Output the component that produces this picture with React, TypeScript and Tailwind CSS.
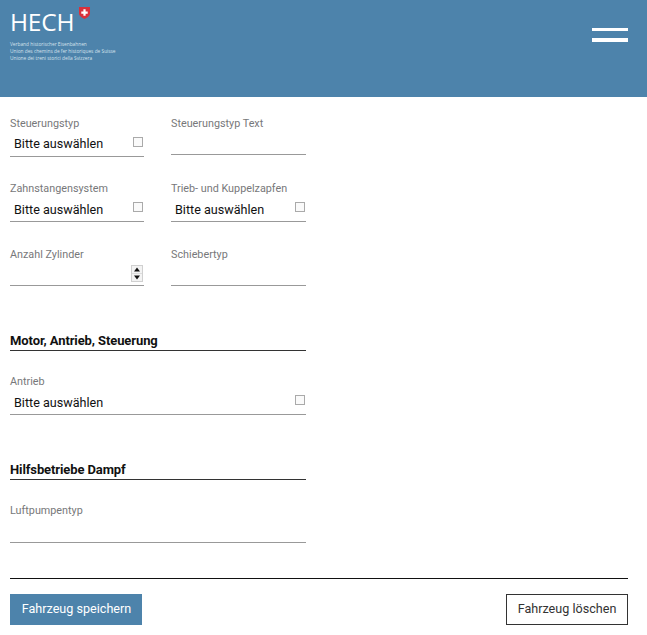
const font = "font-['Roboto',sans-serif]";

function Label({ children }: { children: string }) {
  return <div className={`${font} text-[10.800px] leading-[13px] text-[#77787a]`}>{children}</div>;
}

function SelectField({ label, width, first }: { label: string; width: string; first?: boolean }) {
  return (
    <div className={`${width} shrink-0`}>
      <Label>{label}</Label>
      <div className="mt-[1px] flex h-[26px] items-center justify-between border-b border-[#999] pl-1 pr-[1px]">
        <span className={`${font} ${first ? "mt-[1px]" : "mt-[3px]"} text-[12.600px] leading-[18px] text-[#111]`}>Bitte auswählen</span>
        <span className="mb-[4px] h-[10px] w-[10px] border border-[#aaa] bg-[#fafafa]" />
      </div>
    </div>
  );
}

function TextField({ label, width, tall }: { label: string; width: string; tall?: boolean }) {
  return (
    <div className={`${width} shrink-0`}>
      <Label>{label}</Label>
      <div className={`${tall ? "h-[25px]" : "h-[24px]"} mt-[1px] border-b border-[#999]`} />
    </div>
  );
}

function NumberField({ label, width }: { label: string; width: string }) {
  return (
    <div className={`${width} shrink-0`}>
      <Label>{label}</Label>
      <div className="mt-[1px] flex h-[24px] items-end justify-end border-b border-[#999] pb-[3px] pr-[1px]">
        <div className="flex h-[17px] w-[12px] flex-col gap-[1px] border border-[#d0d0d0] bg-[#dcdcdc]">
          <svg viewBox="0 0 10 7" className="h-[7px] w-[10px] bg-[#f3f3f3]">
            <path d="M2 5.500h6L5 1.500z" fill="#111" />
          </svg>
          <svg viewBox="0 0 10 7" className="h-[7px] w-[10px] bg-[#f3f3f3]">
            <path d="M2 1.500h6L5 5.500z" fill="#111" />
          </svg>
        </div>
      </div>
    </div>
  );
}

function Heading({ children }: { children: string }) {
  return (
    <div className={`${font} w-[296px] border-b border-[#333] pb-[1px] text-[13px] font-bold leading-[17px] tracking-[-0.1px] text-[#111]`}>
      {children}
    </div>
  );
}

export default function App() {
  return (
    <div className="min-h-[635px] w-[647px] overflow-hidden bg-white">
      <header className="flex h-[97px] justify-between bg-[#4d83ab] pl-[10px] pr-[19px]">
        <div>
          <div className="flex h-[41px] items-start">
            <span className="mt-[8px] font-['Open_Sans',sans-serif] text-[24.500px] font-medium leading-[28px] tracking-[-0.2px] text-white">HECH</span>
            <svg viewBox="0 0 12 13" className="ml-[5px] mt-[7px] h-[12px] w-[11px]">
              <path d="M0 0h12v6.500C12 10 8.500 12 6 13 3.500 12 0 10 0 6.500z" fill="#d9303a" />
              <path d="M4.800 2.500h2.400v2.300h2.300v2.400H7.200v2.300H4.800V7.200H2.500V4.800h2.300z" fill="#fff" />
            </svg>
          </div>
          <div className="font-['Open_Sans',sans-serif] text-[4.800px] leading-[7px] text-[#d5e2ec]">
            <div>Verband historischer Eisenbahnen</div>
            <div>Union des chemins de fer historiques de Suisse</div>
            <div>Unione dei treni storici della Svizzera</div>
          </div>
        </div>
        <div className="mt-[28px] flex h-[14px] w-[36px] flex-col justify-between">
          <div className="h-[3px] bg-white" />
          <div className="h-[4px] bg-white" />
        </div>
      </header>

      <main className="pl-[10px] pr-[19px] pt-[20px]">
        <div className="flex gap-[27px]">
          <SelectField label="Steuerungstyp" width="w-[134px]" first />
          <TextField label="Steuerungstyp Text" width="w-[135px]" />
        </div>
        <div className="mt-[25px] flex gap-[27px]">
          <SelectField label="Zahnstangensystem" width="w-[134px]" />
          <SelectField label="Trieb- und Kuppelzapfen" width="w-[135px]" />
        </div>
        <div className="mt-[26px] flex gap-[27px]">
          <NumberField label="Anzahl Zylinder" width="w-[134px]" />
          <TextField label="Schiebertyp" width="w-[135px]" />
        </div>

        <div className="mt-[46px]">
          <Heading>Motor, Antrieb, Steuerung</Heading>
        </div>
        <div className="mt-[24px]">
          <SelectField label="Antrieb" width="w-[296px]" />
        </div>

        <div className="mt-[46px]">
          <Heading>Hilfsbetriebe Dampf</Heading>
        </div>
        <div className="mt-[24px]">
          <TextField label="Luftpumpentyp" width="w-[296px]" tall />
        </div>

        <div className="mt-[35px] flex items-start justify-between border-t border-[#111] pt-[15px]">
          <button className={`${font} h-[31px] w-[132px] bg-[#4d83ab] pl-[1px] text-[12.600px] text-white`}>Fahrzeug speichern</button>
          <button className={`${font} h-[31px] w-[122px] border border-[#333] bg-white text-[12.600px] text-[#333]`}>Fahrzeug löschen</button>
        </div>
      </main>
    </div>
  );
}
